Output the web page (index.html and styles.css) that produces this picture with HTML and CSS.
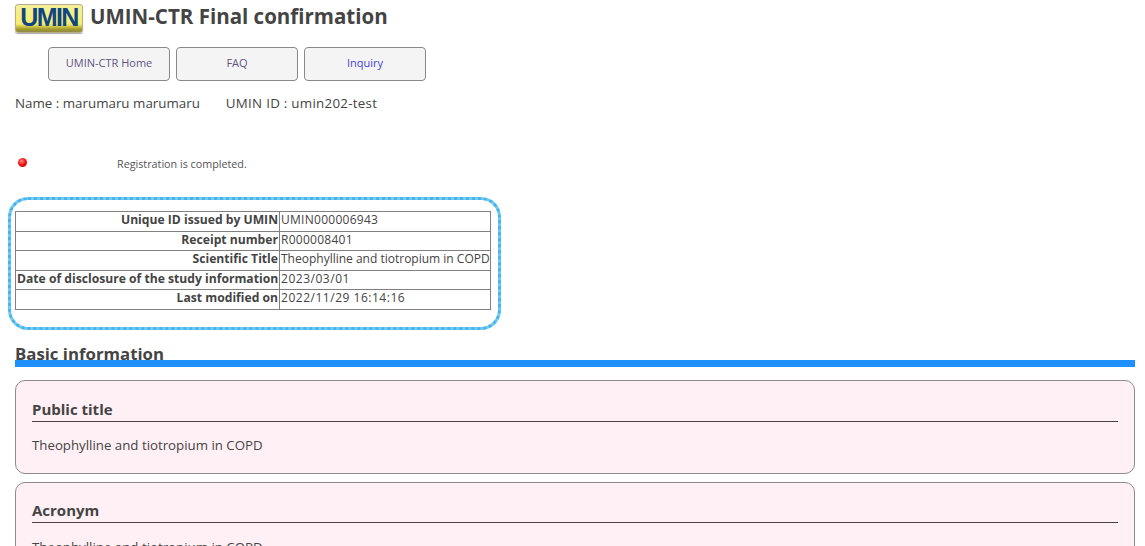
FILE: index.html
```html
<!DOCTYPE html>
<html lang="en">
<head>
<meta charset="utf-8">
<title>UMIN-CTR Final confirmation</title>
<link rel="stylesheet" href="styles.css">
</head>
<body>
<header class="head">
  <div class="logo"><span>UMIN</span></div>
  <h1>UMIN-CTR Final confirmation</h1>
</header>
<nav class="nav">
  <a class="btn" href="#">UMIN-CTR Home</a>
  <a class="btn" href="#">FAQ</a>
  <a class="btn btn-link" href="#">Inquiry</a>
</nav>
<p class="user"><span class="user-name">Name : marumaru marumaru</span><span class="user-id">UMIN ID : umin202-test</span></p>
<div class="status"><span class="dot"></span><span class="status-text">Registration is completed.</span></div>
<div class="summary">
  <table>
    <tr><th>Unique ID issued by UMIN</th><td class="num-light">UMIN000006943</td></tr>
    <tr><th>Receipt number</th><td class="num-light">R000008401</td></tr>
    <tr><th>Scientific Title</th><td>Theophylline and tiotropium in COPD</td></tr>
    <tr><th>Date of disclosure of the study information</th><td class="num">2023/03/01</td></tr>
    <tr><th>Last modified on</th><td class="num">2022/11/29 16:14:16</td></tr>
  </table>
</div>
<h2>Basic information</h2>
<section class="card">
  <h3>Public title</h3>
  <p>Theophylline and tiotropium in COPD</p>
</section>
<section class="card">
  <h3>Acronym</h3>
  <p>Theophylline and tiotropium in COPD</p>
</section>
</body>
</html>
```
FILE: styles.css
```css
html { overflow: hidden; height: 546px; }
body {
  margin: 0;
  padding: 4px 10px 0 15px;
  font-family: "Open Sans", sans-serif;
  font-size: 13px;
  color: #444;
  background: #fff;
}
.head { display: flex; align-items: center; gap: 7px; height: 29px; }
.logo {
  width: 68px; height: 29px; box-sizing: border-box;
  display: flex; align-items: center; justify-content: center;
  border-radius: 3px; border: 1px solid #b5b08a;
  background: linear-gradient(#f4f09a, #f6ee6c 70%, #a39a2a 90%, #8f8a4a);
  box-shadow: 0 1px 1px #aaa;
}
.logo span {
  font: bold 25px "Liberation Sans", sans-serif;
  letter-spacing: -1.6px; color: #0f4583; margin-top: -3px;
}
h1 { margin: 0 0 6px; font-size: 20.5px; font-weight: bold; color: #444; white-space: nowrap; }
.nav { display: flex; gap: 6px; margin: 14px 0 0 33px; }
.btn {
  width: 122px; height: 34px; box-sizing: border-box; padding-bottom: 3px;
  display: flex; align-items: center; justify-content: center;
  border: 1px solid #888; border-radius: 4px; background: #f4f4f4;
  font-size: 11px; color: #5f5585; text-decoration: none;
}
.btn-link { color: #4a3fe0; }
.user { margin: 15px 0 0; font-size: 13.35px; line-height: 15px; }
.user-name { margin-right: 26px; }
.user-id { letter-spacing: .27px; }
.status { display: flex; height: 14px; margin-top: 46px; }
.dot {
  width: 9px; height: 9px; border-radius: 50%; margin: 1px 0 0 3px;
  background: radial-gradient(circle at 40% 35%, #ff8a80, #f01010 50%, #b00000);
}
.status-text { margin-left: 90px; font-size: 10.75px; line-height: 14px; color: #555; }
.summary {
  width: 493px; height: 133px; box-sizing: border-box;
  margin: 26px 0 0 -7px; padding: 11px 0 0 4px;
  border: 3px dotted #45b5ec; border-radius: 20px;
  background: linear-gradient(#fff, #fff) padding-box, #72c9f2 border-box;
}
table { border-collapse: collapse; width: 476px; table-layout: fixed; }
th, td {
  border: 1px solid #808080; padding: 0 1px 3.6px;
  font-size: 12px; line-height: 15px; white-space: nowrap; color: #444;
}
th { width: 261px; font-size: 12.15px; text-align: right; font-weight: bold; }
td { text-align: left; }
.num { letter-spacing: .52px; }
.num-light { letter-spacing: .27px; }
h2 { margin: 13px 0 0; font-size: 16.8px; line-height: 22px; height: 17px; color: #444; border-bottom: 7px solid #1e90ff; }
.card {
  box-sizing: border-box; height: 93.6px; margin-top: 13px; padding: 18.6px 16px 0;
  background: #fff0f5; border: 1px solid #8f8a8c; border-radius: 10px;
}
.card + .card { margin-top: 8px; }
h3 { margin: 0; font-size: 15px; line-height: 18px; padding-bottom: 3px; border-bottom: 1px solid #444; color: #444; }
.card p { margin: 15.7px 0 0; font-size: 13.27px; line-height: 16px; }
```
